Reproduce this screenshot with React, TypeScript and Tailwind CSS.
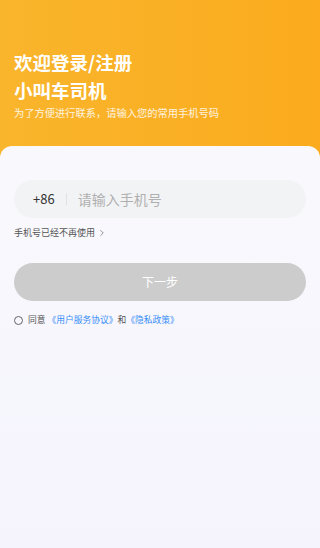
import { ChevronRight } from "lucide-react";

const font = { fontFamily: '"Noto Sans CJK SC", "Noto Sans", sans-serif' };

export default function App() {
  return (
    <div
      className="flex h-[548px] w-full flex-col bg-gradient-to-r from-[#f9b52c] to-[#fbab1d]"
      style={font}
    >
      <div className="h-[146px] shrink-0 px-[14px] pt-[48px] text-white">
        <h1 className="text-[18.5px] font-bold leading-[28px]">欢迎登录/注册</h1>
        <h1 className="text-[18.5px] font-bold leading-[28px]">小叫车司机</h1>
        <p className="mt-[2px] text-[10.25px] leading-[14px] text-white/85">
          为了方便进行联系，请输入您的常用手机号码
        </p>
      </div>

      <div className="flex-1 rounded-t-[12px] bg-gradient-to-b from-[#f9f9fd] to-[#f5f4fd] px-[14px] pt-[34px]">
        <div className="flex h-[38px] items-center rounded-full bg-[#f2f3f5] pl-[19px]">
          <span className="text-[13px] text-[#333]">+86</span>
          <span className="ml-[11px] h-[12px] w-px bg-[#e2e2e2]" />
          <input
            className="ml-[11px] flex-1 bg-transparent text-[14px] text-[#333] outline-none placeholder:text-[#b0b0b0]"
            placeholder="请输入手机号"
          />
        </div>

        <div className="mt-[8px] flex items-center text-[9px] leading-[14px] text-[#555]">
          手机号已经不再使用
          <ChevronRight className="ml-[2px] h-[10px] w-[10px]" strokeWidth={1.5} />
        </div>

        <button className="mt-[23px] flex h-[38px] w-full items-center justify-center rounded-full bg-[#cccccc] text-[12px] text-white">
          下一步
        </button>

        <div className="mt-[12px] flex items-center text-[8.75px] leading-[14px]">
          <span className="h-[9px] w-[9px] rounded-full border border-[#666]" />
          <span className="ml-[5px] text-[#555]">同意</span>
          <span className="ml-[2px] text-[#3a8ef6]">《用户服务协议》</span>
          <span className="text-[#555]">和</span>
          <span className="text-[#3a8ef6]">《隐私政策》</span>
        </div>
      </div>
    </div>
  );
}
